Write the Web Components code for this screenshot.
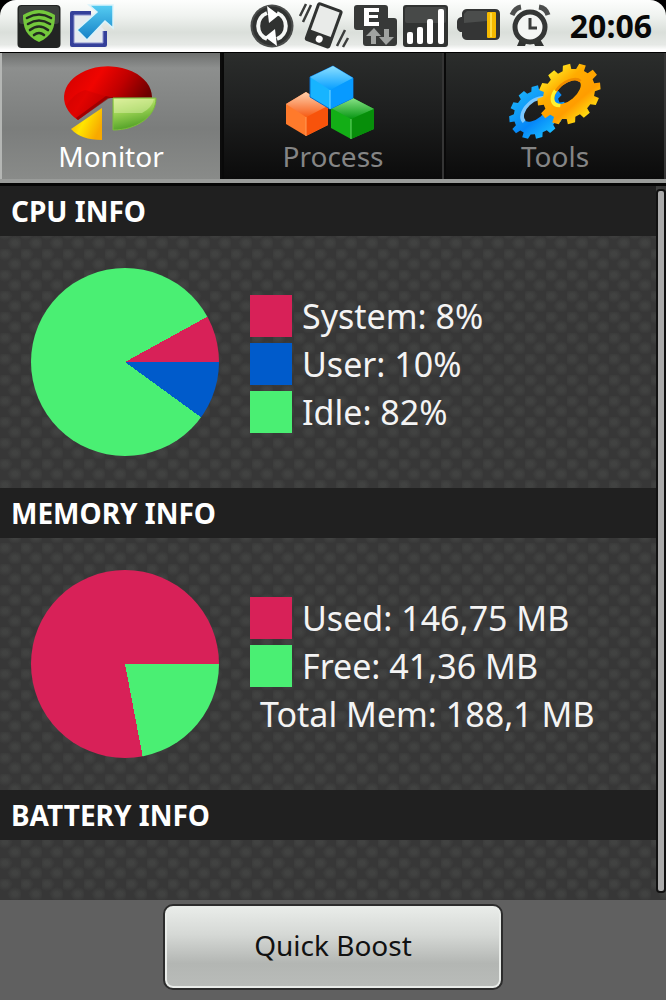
<!DOCTYPE html>
<html lang="en">
<head>
<meta charset="utf-8">
<meta name="viewport" content="width=device-width, initial-scale=1">
<title>System Monitor</title>
<style>
  html, body { height: 100%; margin: 0; }
  body { background: #000; font-family: "Noto Sans", "Open Sans", sans-serif; }
</style>
</head>
<body>
<monitor-app></monitor-app>

<script>
// Status bar icons, 44x44 each
const statusIcons = {
  spot: `
    <rect x="0.5" y="1" width="43" height="43" rx="4" fill="#222423"/>
    <rect x="2" y="2" width="40" height="18" rx="3" fill="#3b3f3d"/>
    <path d="M22 6C16 6 11 8 6 11C6 24 9 32 22 38C35 32 38 24 38 11C33 8 28 6 22 6Z" fill="#74c83c"/>
    <g fill="none" stroke="#222b20" stroke-width="2.6" stroke-linecap="round">
      <path d="M10 14Q22 7 34 14M11 20Q22 13 33 20M13 26Q22 19 31 26M17 31Q22 27 27 31"/>
    </g>`,
  share: `
    <path d="M22 9H3V41H36V27" fill="#e6ebef" stroke="#34409a" stroke-width="4" stroke-linejoin="round"/>
    <path d="M22 11H5V39H34V27" fill="none" stroke="#8990cc" stroke-width="1"/>
    <path d="M20 1H44V24L36 17L18 36L8 26L28 8Z" fill="url(#blue)" stroke="#d9f3fb" stroke-width="1.5"/>
    <defs><linearGradient id="blue" x2="0" y2="1"><stop stop-color="#56cdf2"/><stop offset="1" stop-color="#137fc6"/></linearGradient></defs>`,
  sync: `
    <circle cx="22" cy="22" r="21.5" fill="#4a4c4b"/>
    <circle cx="22" cy="22" r="19.5" fill="#303231"/>
    <g fill="none" stroke="#f5f7f5" stroke-width="4">
      <path d="M17 35A14 14 0 0 1 17 9M27 9A14 14 0 0 1 27 35"/>
    </g>
    <path d="M17 2L29 11L19 19ZM27 42L15 33L25 25Z" fill="#fff"/>`,
  phone: `
    <g transform="rotate(20 22 22)">
      <rect x="8" y="1" width="27" height="41" rx="3" fill="#303231"/>
      <rect x="11" y="4" width="21" height="26" fill="#e9ebe9"/>
      <circle cx="22" cy="36" r="3.5" fill="#fff"/>
    </g>
    <path d="M4 0L-2 12M9 1L1 18M43 26L35 42M46 34L41 43" stroke="#3b3d3c" stroke-width="2.5"/>`,
  edge: `
    <path d="M3 1H31Q34 1 34 4V14H40Q43 14 43 17V39Q43 42 40 42H12Q9 42 9 39V26H3Q0 26 0 23V4Q0 1 3 1Z" fill="#373938"/>
    <path d="M10 4H25V8H15V11H24V14H15V18H25V22H10Z" fill="#fff"/>
    <path d="M20 24L27 32H22V40H17V32H12ZM32 41L25 33H30V25H35V33H40Z" fill="#a0a3a1"/>`,
  signal: `
    <rect x="-3" y="1" width="45" height="42" rx="3" fill="#313332"/>
    <rect x="-1" y="3" width="41" height="16" rx="2" fill="#474948"/>
    <g fill="#fff"><rect x="1" y="28" width="6" height="12" rx="2"/><rect x="11" y="23" width="6" height="17" rx="2"/><rect x="21" y="15" width="6" height="25" rx="2"/><rect x="32" y="5" width="6" height="35" rx="2"/></g>`,
  battery: `
    <path d="M9 5H37Q42 5 42 10V31Q42 36 37 36H9Q5 36 4 32V28H2Q-1 26 -1 24V18Q-1 14 3 13H4V9Q5 5 9 5Z" fill="#343535"/>
    <path d="M9 7H29V17L6 19V10Z" fill="#4b4d4c"/>
    <rect x="29" y="8" width="9" height="26" rx="1" fill="#f5b900"/>
    <rect x="32" y="9" width="2" height="24" fill="#ffdc45"/>`,
  alarm: `
    <g transform="translate(-2 0)">
      <g fill="none" stroke="#4c4e4d" stroke-width="5"><path d="M4 11Q7 4 13 3M31 3Q38 4 40 11"/></g>
      <path d="M12 35L9 42H17L19 37M32 35L36 42H27L25 37" fill="#303231"/>
      <circle cx="22" cy="23" r="15" fill="#f4f6f4" stroke="#343635" stroke-width="5"/>
      <path d="M22 14V24H29" fill="none" stroke="#3a3c3b" stroke-width="3"/>
    </g>`
};

// Outline of a toothed wheel centred on 0,0, with an oval hole
function gearPath(teeth, outer, inner, holeX, holeY) {
  const step = Math.PI * 2 / teeth;
  const at = (r, a) => `${(r * Math.cos(a)).toFixed(2)} ${(r * Math.sin(a)).toFixed(2)}`;
  let d = "";
  for (let i = 0; i < teeth; i++) {
    const a = i * step;
    d += `${i ? "L" : "M"}${at(inner, a - step * 0.32)}L${at(outer, a - step * 0.22)}L${at(outer, a + step * 0.22)}L${at(inner, a + step * 0.32)}`;
  }
  return `${d}ZM${holeX} -3A${holeX} ${holeY} 0 1 0 ${-holeX} -3A${holeX} ${holeY} 0 1 0 ${holeX} -3Z`;
}

// Tab icons, 96x76 each
const tabIcons = {
  monitor: `
    <defs>
      <linearGradient id="r" x1="0" x2="1" y2="0.4"><stop stop-color="#c00"/><stop offset="0.4" stop-color="#f00400"/><stop offset="0.68" stop-color="#c00000"/><stop offset="1" stop-color="#6d0000"/></linearGradient>
      <linearGradient id="g" x2="0.3" y2="1"><stop stop-color="#d6ee8b"/><stop offset="0.45" stop-color="#9fd556"/><stop offset="1" stop-color="#4f9f25"/></linearGradient>
      <linearGradient id="y" x2="1" y2="0.5"><stop stop-color="#f59c00"/><stop offset="0.5" stop-color="#ffe500"/><stop offset="1" stop-color="#f8a900"/></linearGradient>
    </defs>
    <path d="M45 32L15 54A44 31 0 1 1 89 31Z" fill="url(#r)"/>
    <path d="M45 31L22 24Q10 28 3 40Q6 48 15 54Z" fill="#a00" opacity="0.2"/>
    <path d="M45 33L15 54L13 52L43 30L47 31H89V32H48Z" fill="#810000" opacity="0.6"/>
    <path d="M50 32H93C93 51 73 64 50 64Z" fill="url(#g)" stroke="#7cbd3b"/>
    <path d="M51 33H91Q89 42 79 47H51Z" fill="#eaf6bc" opacity="0.4"/>
    <path d="M39 42V74Q18 74 8 63Z" fill="url(#y)"/>`,
  process: `
    <defs>
      <linearGradient id="b" x2="0" y2="1"><stop stop-color="#8bdfff"/><stop offset="1" stop-color="#069eff"/></linearGradient>
      <linearGradient id="o" x2="0" y2="1"><stop stop-color="#ffd0ac"/><stop offset="1" stop-color="#f65c16"/></linearGradient>
      <linearGradient id="n" x2="0" y2="1"><stop stop-color="#8ee58c"/><stop offset="1" stop-color="#079613"/></linearGradient>
    </defs>
    <g transform="translate(-4 0)">
      <path d="M25 26L47 40V59L25 70L5 58V38Z" fill="#ff7a2b"/><path d="M25 26L47 40L25 51L5 38Z" fill="url(#o)"/><path d="M25 51L47 40V59L25 70Z" fill="#f7530b"/><path d="M25 51V70" stroke="#ff9b59"/>
      <path d="M70 31L93 43V63L70 73L50 62V42Z" fill="#13ae16"/><path d="M70 31L93 43L70 53L50 42Z" fill="url(#n)"/><path d="M70 53L93 43V63L70 73Z" fill="#078e0a"/><path d="M70 53V73" stroke="#69d568"/>
      <path d="M52 0L72 12V32L49 43L29 31V11Z" fill="#17b4ff" stroke="#096ccc"/><path d="M52 0L72 12L49 24L29 11Z" fill="url(#b)"/><path d="M49 24L72 12V32L49 43Z" fill="#079aff"/><path d="M49 24V43" stroke="#7bdaff"/>
    </g>`,
  tools: `
    <defs>
      <linearGradient id="a" x2="0" y2="1"><stop stop-color="#ffe11d"/><stop offset="0.3" stop-color="#ffac00"/><stop offset="0.7" stop-color="#ff9d00"/><stop offset="1" stop-color="#ffdc10"/></linearGradient>
      <linearGradient id="c" x2="0" y2="1"><stop stop-color="#19aef9"/><stop offset="0.6" stop-color="#0686f8"/><stop offset="1" stop-color="#18b8ff"/></linearGradient>
    </defs>
    <g transform="translate(30 46) rotate(-40) scale(1 0.82)">
      <path d="${gearPath(12, 30, 25, 15, 10)}" fill="url(#c)" fill-rule="evenodd"/>
      <path d="M-16 -1A16 12 0 0 1 16 -3" fill="none" stroke="#7cc8ff" stroke-width="4"/>
    </g>
    <g transform="translate(62 28) rotate(-40) scale(1 0.82)">
      <path d="${gearPath(12, 34, 28, 16, 10)}" fill="url(#a)" fill-rule="evenodd"/>
      <path d="M-14 4A17 12 0 0 1 -8 -14" fill="none" stroke="#fff230" stroke-width="4"/>
      <path d="M-8 -13A17 12 0 0 1 17 -3" fill="none" stroke="#ef8c00" stroke-width="3"/>
    </g>`
};

class StatusIcon extends HTMLElement {
  constructor() {
    super();
    this.attachShadow({ mode: "open" });
  }

  connectedCallback() {
    this.shadowRoot.innerHTML = `
      <style>
        :host { display: block; width: 44px; height: 44px; }
        svg { display: block; overflow: visible; }
      </style>
      <svg width="44" height="44" viewBox="0 0 44 44" aria-hidden="true">${statusIcons[this.getAttribute("name")]}</svg>
    `;
  }
}

class StatusBar extends HTMLElement {
  constructor() {
    super();
    this.attachShadow({ mode: "open" }).innerHTML = `
      <style>
        :host { display: block; background: #000; }
        .bar {
          display: flex;
          align-items: center;
          gap: 8px;
          height: 52px;
          box-sizing: border-box;
          padding: 0 14px 0 17px;
          border-radius: 16px 16px 0 0;
          background: linear-gradient(#fdfefd, #f0f3f0 30%, #dadfda 62%, #e6e9e6 86%, #fff 96%);
        }
        .spacer { flex: 1; }
        .time { margin-left: 8px; font-size: 32px; line-height: 52px; font-weight: bold; color: #080808; }
      </style>
      <div class="bar">
        <slot name="notice"></slot>
        <span class="spacer"></span>
        <slot></slot>
        <span class="time"><slot name="time"></slot></span>
      </div>
    `;
  }
}

class TabItem extends HTMLElement {
  constructor() {
    super();
    this.attachShadow({ mode: "open" });
  }

  connectedCallback() {
    const selected = this.hasAttribute("selected");
    this.shadowRoot.innerHTML = `
      <style>
        :host { display: block; flex: 1; }
        button {
          display: flex;
          flex-direction: column;
          align-items: center;
          width: 100%;
          height: 126px;
          box-sizing: border-box;
          margin: 0;
          padding: 13px 0 0;
          border: 0;
          border-left: 2px solid #090909;
          border-right: 2px solid #353535;
          background: linear-gradient(#2b2d2c, #1e1f1f 45%, #0b0b0b);
          color: #858585;
          font: inherit;
          font-size: 28px;
          line-height: 28px;
        }
        button[aria-selected="true"] {
          border-left-color: #b4b6b4;
          border-right-color: #0c0c0c;
          background: linear-gradient(#6e706f, #8d8f8e 12%, #7b7d7c 60%, #898b89);
          color: #fff;
        }
        svg { display: block; overflow: visible; }
      </style>
      <button type="button" role="tab" aria-selected="${selected}">
        <svg width="96" height="76" viewBox="0 0 96 76" aria-hidden="true">${tabIcons[this.getAttribute("icon")]}</svg>
        <slot></slot>
      </button>
    `;
  }
}

class TabStrip extends HTMLElement {
  constructor() {
    super();
    this.attachShadow({ mode: "open" }).innerHTML = `
      <style>
        :host {
          display: flex;
          border-top: 1px solid #000;
          border-bottom: 4px solid #9a9c9a;
          background: #000;
        }
      </style>
      <slot></slot>
    `;
    this.setAttribute("role", "tablist");
  }
}

class InfoSection extends HTMLElement {
  constructor() {
    super();
    this.attachShadow({ mode: "open" });
  }

  connectedCallback() {
    this.shadowRoot.innerHTML = `
      <style>
        :host { display: block; }
        h2 {
          margin: 0;
          padding: 0 11px;
          background: #202020;
          color: #fff;
          font-size: 28px;
          line-height: 50px;
          font-weight: bold;
        }
        .body { display: flex; align-items: center; gap: 31px; padding: 32px 31px; }
      </style>
      <h2>${this.getAttribute("heading")}</h2>
      <div class="body"><slot></slot></div>
    `;
  }
}

// slices="percent color, percent color": clockwise from three o'clock
class PieChart extends HTMLElement {
  constructor() {
    super();
    this.attachShadow({ mode: "open" });
  }

  connectedCallback() {
    let from = 0;
    const stops = this.getAttribute("slices").split(",").map(slice => {
      const [percent, color] = slice.trim().split(" ");
      const to = from + Number(percent);
      const stop = `${color} ${from}% ${to}%`;
      from = to;
      return stop;
    });
    this.shadowRoot.innerHTML = `
      <style>
        :host { display: block; flex: none; }
        div {
          width: 188px;
          height: 188px;
          border-radius: 50%;
          background: conic-gradient(from 90deg, ${stops.join(", ")});
        }
      </style>
      <div role="img" aria-label="${this.getAttribute("label")}"></div>
    `;
  }
}

class LegendItem extends HTMLElement {
  constructor() {
    super();
    this.attachShadow({ mode: "open" });
  }

  connectedCallback() {
    const color = this.getAttribute("color");
    this.shadowRoot.innerHTML = `
      <style>
        :host {
          display: flex;
          align-items: center;
          gap: 10px;
          color: #f4f4f4;
          font-size: 34px;
          line-height: 48px;
          white-space: nowrap;
        }
        i { width: 42px; height: 42px; background: ${color}; }
        .plain { padding-left: 10px; }
      </style>
      ${color ? "<i></i>" : ""}
      <span class="${color ? "" : "plain"}"><slot></slot></span>
    `;
  }
}

class BoostButton extends HTMLElement {
  constructor() {
    super();
    this.attachShadow({ mode: "open" }).innerHTML = `
      <style>
        :host { display: block; width: 51%; }
        button {
          display: block;
          width: 100%;
          height: 86px;
          padding: 0 0 4px;
          border: 2px solid #2c2c2c;
          border-radius: 10px;
          background: linear-gradient(#eaedea, #d5d8d5 35%, #b3b6b3 70%, #b9bcb9);
          box-shadow: inset 0 0 0 2px #e9ece9;
          color: #111;
          font: inherit;
          font-size: 28px;
        }
      </style>
      <button type="button"><slot></slot></button>
    `;
  }
}

class MonitorApp extends HTMLElement {
  constructor() {
    super();
    this.attachShadow({ mode: "open" }).innerHTML = `
      <style>
        :host { display: flex; flex-direction: column; height: 100vh; }
        main {
          flex: 1;
          min-height: 0;
          display: flex;
          border-top: 3px solid #050505;
          background-color: #373737;
          background-image:
            radial-gradient(ellipse 8px 7px at 5px 5px, #414241 30%, transparent),
            radial-gradient(ellipse 8px 7px at 15px 15px, #414241 30%, transparent);
          background-size: 21px 21px;
        }
        .list { flex: 1; min-width: 0; overflow: hidden; }
        .scroll { width: 10px; padding: 3px 0 7px; }
        .thumb {
          height: 100%;
          box-sizing: border-box;
          border: 2px solid #111;
          border-radius: 4px;
          background: #aaa;
        }
        .legend { padding-top: 4px; }
        footer { display: flex; justify-content: center; padding: 4px 0 10px; background: #606060; }
      </style>
      <status-bar>
        <status-icon slot="notice" name="spot"></status-icon>
        <status-icon slot="notice" name="share"></status-icon>
        <status-icon name="sync"></status-icon>
        <status-icon name="phone"></status-icon>
        <status-icon name="edge"></status-icon>
        <status-icon name="signal"></status-icon>
        <status-icon name="battery"></status-icon>
        <status-icon name="alarm"></status-icon>
        <span slot="time">20:06</span>
      </status-bar>
      <tab-strip>
        <tab-item icon="monitor" selected>Monitor</tab-item>
        <tab-item icon="process">Process</tab-item>
        <tab-item icon="tools">Tools</tab-item>
      </tab-strip>
      <main>
        <div class="list">
          <info-section heading="CPU INFO">
            <pie-chart label="CPU use" slices="10 #005bcb, 82 #4aef73, 8 #d82158"></pie-chart>
            <div class="legend">
              <legend-item color="#d82158">System: 8%</legend-item>
              <legend-item color="#005bcb">User: 10%</legend-item>
              <legend-item color="#4aef73">Idle: 82%</legend-item>
            </div>
          </info-section>
          <info-section heading="MEMORY INFO">
            <pie-chart label="Memory use" slices="22 #4aef73, 78 #d82158"></pie-chart>
            <div class="legend">
              <legend-item color="#d82158">Used: 146,75 MB</legend-item>
              <legend-item color="#4aef73">Free: 41,36 MB</legend-item>
              <legend-item>Total Mem: 188,1 MB</legend-item>
            </div>
          </info-section>
          <info-section heading="BATTERY INFO"></info-section>
        </div>
        <div class="scroll"><div class="thumb"></div></div>
      </main>
      <footer><boost-button>Quick Boost</boost-button></footer>
    `;
  }
}

customElements.define("status-icon", StatusIcon);
customElements.define("status-bar", StatusBar);
customElements.define("tab-item", TabItem);
customElements.define("tab-strip", TabStrip);
customElements.define("info-section", InfoSection);
customElements.define("pie-chart", PieChart);
customElements.define("legend-item", LegendItem);
customElements.define("boost-button", BoostButton);
customElements.define("monitor-app", MonitorApp);
</script>
</body>
</html>
